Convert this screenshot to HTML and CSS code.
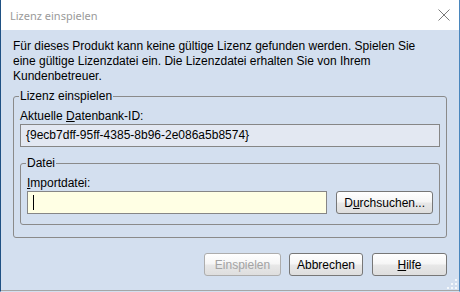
FILE: index.html
```html
<!DOCTYPE html>
<html lang="de">
<head>
    <meta charset="UTF-8">
    <title>Lizenz einspielen</title>
    <link rel="stylesheet" href="styles.css">
</head>
<body>

    <div class="window">
        <div class="titlebar">
            <span class="title">Lizenz einspielen</span>
            <svg class="close" width="12" height="12" viewBox="0 0 12 12">
                <path d="M0.5 0.5 L11.5 11.5 M11.5 0.5 L0.5 11.5" stroke="#7a7a7a" stroke-width="1" fill="none"/>
            </svg>
        </div>

        <div class="content">
            <p class="intro">Für dieses Produkt kann keine gültige Lizenz gefunden werden. Spielen Sie<br>eine gültige Lizenzdatei ein. Die Lizenzdatei erhalten Sie von Ihrem<br>Kundenbetreuer.</p>

            <fieldset class="group">
                <legend>Lizenz einspielen</legend>
                <div class="label">Aktuelle <u>D</u>atenbank-ID:</div>
                <div class="field readonly">{9ecb7dff-95ff-4385-8b96-2e086a5b8574}</div>

                <fieldset class="group inner">
                    <legend>Datei</legend>
                    <div class="label"><u>I</u>mportdatei:</div>
                    <div class="file-row">
                        <div class="field file-input"><span class="caret"></span></div>
                        <button class="btn browse">D<u>u</u>rchsuchen...</button>
                    </div>
                </fieldset>
            </fieldset>

            <div class="buttons">
                <button class="btn ok" disabled>Einspielen</button>
                <button class="btn cancel">Abbrechen</button>
                <button class="btn help"><u>H</u>ilfe</button>
            </div>
        </div>

        <svg class="grip" width="12" height="12" viewBox="0 0 12 12">
            <rect x="9" y="1" width="2" height="2" fill="#f4f8fc"/>
            <rect x="5" y="5" width="2" height="2" fill="#f4f8fc"/>
            <rect x="9" y="5" width="2" height="2" fill="#f4f8fc"/>
            <rect x="1" y="9" width="2" height="2" fill="#f4f8fc"/>
            <rect x="5" y="9" width="2" height="2" fill="#f4f8fc"/>
            <rect x="9" y="9" width="2" height="2" fill="#f4f8fc"/>
        </svg>
    </div>

</body>
</html>
```

FILE: styles.css
```css
body {
    margin: 0;
    font-family: "Liberation Sans", Arial, sans-serif;
    font-size: 12px;
    color: #000000;
    background-color: #d3dfef;
}

.window {
    position: relative;
    width: 460px;
    height: 292px;
    box-sizing: border-box;
    border-left: 1px solid #1f5184;
    border-right: 1px solid #4a86bd;
    border-bottom: 1px solid #d3dfef;
    display: flex;
    flex-direction: column;
    background-color: #d3dfef;
}

.titlebar {
    height: 30px;
    flex: none;
    background-color: #ffffff;
    display: flex;
    align-items: center;
    justify-content: space-between;
    padding: 0 9px 0 9px;
}

.title {
    font-family: "Noto Sans", "Open Sans", sans-serif;
    font-size: 11px;
    color: #9a9a9a;
    margin-top: 1px;
}

.content {
    flex: 1;
    padding: 9px 12px 0 12px;
    border-bottom: 1px solid #a6a6a6;
}

.intro {
    margin: 0;
    line-height: 15px;
}

.group {
    margin: 5px 0 0 0;
    padding: 0 6px 12px 6px;
    border: 1px solid #8a8a8a;
    border-radius: 3px;
    min-width: 0;
}

.group legend {
    padding: 0 1px;
    margin-left: -1px;
    line-height: 14px;
}

.label {
    margin-top: 6px;
    line-height: 14px;
    margin-bottom: 1px;
}

.field {
    height: 23px;
    box-sizing: border-box;
    border: 1px solid #868686;
    line-height: 21px;
    padding: 0 5px;
}

.readonly {
    background-color: #e3e8f2;
}

.inner {
    margin-top: 9px;
    padding-bottom: 10px;
}

.file-row {
    display: flex;
    gap: 9px;
}

.file-input {
    width: 301px;
    background-color: #ffffe4;
    display: flex;
    align-items: center;
}

.caret {
    width: 1px;
    height: 15px;
    background-color: #000000;
}

.btn {
    font-family: "Liberation Sans", Arial, sans-serif;
    font-size: 12px;
    color: #000000;
    height: 23px;
    padding: 0;
    border: 1px solid #777777;
    border-radius: 3px;
    background: linear-gradient(#ffffff 0%, #f6f6f6 45%, #e7e7e7 55%, #dedede 100%);
}

.browse {
    width: 97px;
}

.buttons {
    display: flex;
    justify-content: flex-end;
    gap: 8px;
    margin-top: 15px;
}

.ok {
    width: 77px;
    color: #a3a3a3;
    border-color: #adadad;
}

.cancel {
    width: 74px;
}

.help {
    width: 75px;
    margin-left: 1px;
}

.grip {
    position: absolute;
    right: 1px;
    bottom: 1px;
}
```
